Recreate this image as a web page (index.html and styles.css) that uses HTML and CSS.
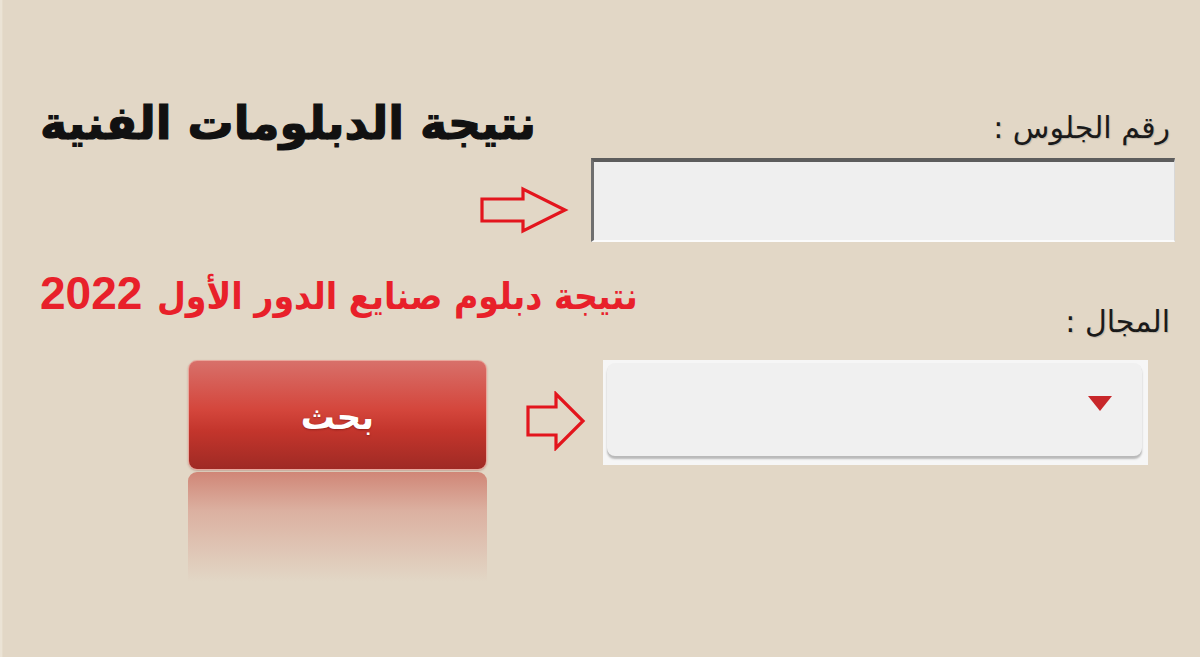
FILE: index.html
```html
<!DOCTYPE html>
<html lang="ar">
<head>
<meta charset="utf-8">
<title>نتيجة الدبلومات الفنية</title>
<link rel="stylesheet" href="styles.css">
</head>
<body>
<div class="page">
  <div class="row row-head">
    <h1 class="title">نتيجة الدبلومات الفنية</h1>
    <label class="label label-seat">رقم الجلوس :</label>
  </div>
  <div class="row row-input">
    <svg class="arrow arrow-1" width="90" height="48" viewBox="0 0 90 48">
      <polygon points="3,13 44,13 44,3 86,24 44,45 44,35 3,35" fill="none" stroke="#e3151d" stroke-width="3.2" stroke-linejoin="miter"/>
    </svg>
    <div class="seat-input"></div>
  </div>
  <div class="row row-sub">
    <p class="subtitle"><span class="sub-ar">نتيجة دبلوم صنايع الدور الأول</span> <span class="sub-num">2022</span></p>
    <label class="label label-field">المجال :</label>
  </div>
  <div class="row row-controls">
    <div class="btn-wrap">
      <div class="btn">بحث</div>
      <div class="btn-reflect"></div>
    </div>
    <svg class="arrow arrow-2" width="62" height="60" viewBox="0 0 62 60">
      <polygon points="3,16 31,16 31,3 58,30 31,57 31,44 3,44" fill="none" stroke="#e3151d" stroke-width="3.2"/>
    </svg>
    <div class="select-outer">
      <div class="select">
        <span class="caret"></span>
      </div>
    </div>
  </div>
</div>
</body>
</html>
```
FILE: styles.css
```css
html, body {
  margin: 0;
  padding: 0;
}
body {
  width: 1200px;
  height: 657px;
  overflow: hidden;
  background: #e2d7c6;
  box-shadow: inset 2px 0 0 #ebe3d5, inset 3px 0 0 #e6dccb;
  font-family: "DejaVu Sans", sans-serif;
}
.page {
  padding: 92px 25px 0 40px;
  direction: ltr;
}
.row {
  display: flex;
}
.row-head {
  height: 62px;
  justify-content: space-between;
  align-items: center;
}
.title {
  margin: 0;
  font-family: "DejaVu Sans", sans-serif;
  font-weight: 700;
  font-size: 46px;
  line-height: 62px;
  color: #111;
  direction: rtl;
  -webkit-text-stroke: 1.2px #111;
}
.label {
  direction: rtl;
  color: #1a1a1a;
  font-family: "DejaVu Sans", sans-serif;
  font-size: 30px;
  text-shadow: 1px 1px 1px rgba(0,0,0,0.15);
}
.label-seat {
  margin-right: 5px;
  margin-top: 8px;
}
.row-input {
  margin-top: 4px;
  height: 84px;
  justify-content: flex-end;
  align-items: flex-start;
}
.arrow-1 {
  margin-top: 28px;
  margin-right: 22px;
}
.seat-input {
  width: 584px;
  height: 84px;
  background: #efefef;
  border-top: 4px solid #5d5d5d;
  border-left: 3px solid #6f6f6f;
  border-bottom: 2px solid #fbfbfb;
  border-right: 1px solid #d8d8d8;
  box-sizing: border-box;
}
.row-sub {
  height: 118px;
  justify-content: space-between;
  align-items: flex-start;
}
.subtitle {
  margin: 26px 0 0;
  direction: rtl;
  white-space: nowrap;
  font-weight: 700;
  line-height: 50px;
  color: #e8202a;
}
.sub-ar {
  font-family: "DejaVu Sans Condensed", "DejaVu Sans", sans-serif;
  font-stretch: condensed;
  font-size: 37px;
}
.sub-num {
  font-family: "Liberation Sans", sans-serif;
  font-size: 46px;
  margin-right: 9px;
}
.label-field {
  margin-top: 62px;
  margin-right: 5px;
}
.row-controls {
  align-items: flex-start;
  padding-left: 148px;
}
.btn-wrap {
  width: 299px;
  display: flex;
  flex-direction: column;
}
.btn {
  height: 110px;
  box-sizing: border-box;
  padding-top: 4px;
  border-radius: 9px;
  border: 1px solid #e9a79c;
  background: linear-gradient(to bottom, #d8706a 0%, #d4463c 45%, #c3352c 65%, #9f2a24 100%);
  color: #fff;
  font-family: "DejaVu Sans", sans-serif;
  font-weight: 700;
  font-size: 34px;
  display: flex;
  align-items: center;
  justify-content: center;
  text-shadow: 0 1px 2px rgba(80,0,0,0.4);
  box-shadow: 0 1px 2px rgba(120,40,30,0.3);
}
.btn-reflect {
  margin-top: 2px;
  height: 110px;
  border-radius: 9px 9px 0 0;
  background: linear-gradient(to bottom, rgba(205,120,105,0.85) 0%, rgba(215,150,135,0.6) 35%, rgba(226,215,198,0) 100%);
}
.arrow-2 {
  margin-top: 31px;
  margin-left: 38px;
}
.select-outer {
  margin-left: 16px;
  width: 545px;
  height: 105px;
  background: #f6f6f6;
  padding: 3px 6px 9px 4px;
  box-sizing: border-box;
}
.select {
  height: 100%;
  background: #f0f0f0;
  border-radius: 8px;
  box-shadow: 0 3px 2px #b9b9b9, 0 1px 0 #d0d0d0;
  display: flex;
  justify-content: flex-end;
  align-items: center;
}
.caret {
  margin-right: 30px;
  margin-top: -12px;
  width: 0;
  height: 0;
  border-left: 12px solid transparent;
  border-right: 12px solid transparent;
  border-top: 15px solid #c8272a;
  filter: blur(0.6px);
}
```
